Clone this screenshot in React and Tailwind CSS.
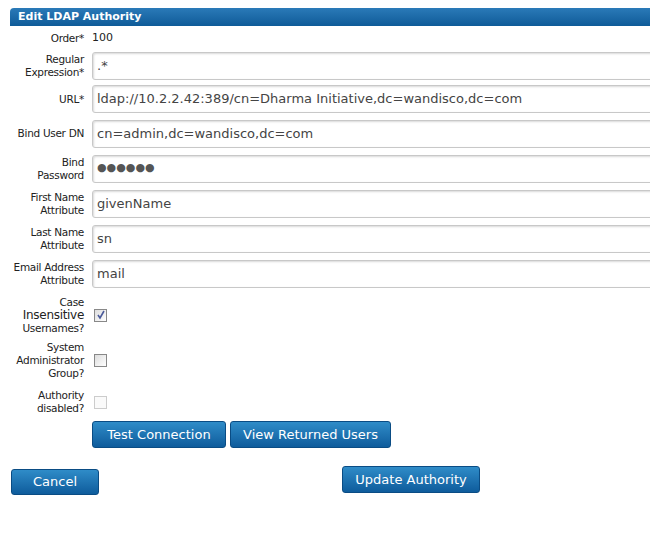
import React from "react";

const font = { fontFamily: "'DejaVu Sans', Verdana, sans-serif" };

function Label({ children }) {
  return (
    <div className="w-[84px] shrink-0 text-right text-[10.5px] leading-[13px] text-[#222]" style={{ letterSpacing: "-0.3px" }}>
      {children}
    </div>
  );
}

function Field({ label, value, h = "h-[35px]", dots }) {
  return (
    <div className={`flex items-center gap-[8px] ${h}`}>
      <Label>{label}</Label>
      <div className="h-[28px] flex-1 mr-[-20px] rounded-[3px] border border-[#c8c8c8] bg-white shadow-[inset_1px_1px_2px_rgba(0,0,0,0.15)] flex items-center pl-[4px] text-[13px] text-[#444] whitespace-nowrap overflow-hidden">
        {dots ? <span className="text-[11px] tracking-[0px] text-[#555]">●●●●●●</span> : value}
      </div>
    </div>
  );
}

function Check({ label, h, checked, disabled }) {
  return (
    <div className={`flex items-center gap-[10px] ${h}`}>
      <Label>{label}</Label>
      <div className={`w-[13px] h-[13px] border ${disabled ? "border-[#ccc] bg-[#fafafa]" : "border-[#888] bg-gradient-to-br from-[#ddd] to-[#fff]"} flex items-center justify-center`}>
        {checked && (
          <svg width="10" height="10" viewBox="0 0 10 10"><path d="M2 5 L4 8 L8 1" stroke="#4a5a9a" strokeWidth="1.6" fill="none" /></svg>
        )}
      </div>
    </div>
  );
}

const btn = "rounded-[3px] border border-[#0a4c84] bg-gradient-to-b from-[#2f8cc8] to-[#0e5c9c] text-white text-[13px] flex items-center justify-center";

export default function App() {
  return (
    <div className="w-[650px] h-[540px] bg-white overflow-hidden pt-[8px]" style={font}>
      <div className="ml-[10px] h-[18px] rounded-tl-[4px] bg-gradient-to-b from-[#2a7ab8] to-[#0e5b98] text-white text-[11px] font-bold flex items-center pl-[8px]">
        Edit LDAP Authority
      </div>
      <div className="flex items-center gap-[8px] h-[24px]">
        <Label>Order*</Label>
        <span className="text-[11px] text-[#222]">100</span>
      </div>
      <Field label={<>Regular<br />Expression*</>} value=".*" h="h-[32px]" />
      <Field label="URL*" value="ldap://10.2.2.42:389/cn=Dharma Initiative,dc=wandisco,dc=com" h="h-[34px]" />
      <Field label="Bind User DN" value="cn=admin,dc=wandisco,dc=com" />
      <Field label={<>Bind<br />Password</>} dots />
      <Field label={<>First Name<br />Attribute</>} value="givenName" />
      <Field label={<>Last Name<br />Attribute</>} value="sn" />
      <Field label={<>Email Address<br />Attribute</>} value="mail" />
      <Check h="h-[46px] mt-[1px]" checked label={<>Case<br /><span className="text-[12px]">Insensitive</span><br />Usernames?</>} />
      <Check h="h-[45px]" label={<>System<br />Administrator<br />Group?</>} />
      <Check h="h-[38px]" disabled label={<>Authority<br />disabled?</>} />
      <div className="flex gap-[4px] ml-[92px]">
        <div className={`${btn} w-[134px] h-[27px]`}>Test Connection</div>
        <div className={`${btn} w-[161px] h-[27px]`}>View Returned Users</div>
      </div>
      <div className="flex items-start mt-[18px]">
        <div className={`${btn} ml-[11px] mt-[3px] w-[88px] h-[26px]`}>Cancel</div>
        <div className={`${btn} ml-[243px] w-[138px] h-[27px]`}>Update Authority</div>
      </div>
    </div>
  );
}
